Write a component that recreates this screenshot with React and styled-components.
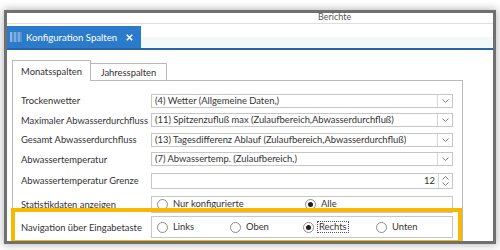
import React from 'react';
import styled, { createGlobalStyle } from 'styled-components';

const FONT = `Lato, "Open Sans", sans-serif`;

const Global = createGlobalStyle`
  html, body { margin: 0; padding: 0; background: #fff; }
  body { font-family: ${FONT}; width: 500px; height: 250px; overflow: hidden; padding-top: 10px; }
  * { box-sizing: border-box; }
`;

const Window = styled.div`
  margin-left: 4px;
  width: 492px;
  height: 234px;
  border: 3px solid #707070;
  background: #fff;
  box-shadow: 0 0 8px 1px rgba(0, 0, 0, 0.28);
  overflow: hidden;
  display: flex;
  flex-direction: column;
`;

const TopStrip = styled.div`
  flex: none;
  height: 11px;
  border-bottom: 1px solid #dedede;
  padding-left: 311px;
  font-size: 9px;
  line-height: 7px;
  color: #555;
`;

const DocBar = styled.div`
  flex: none;
  height: 26px;
  padding-top: 2px;
  border-bottom: 2px solid #2767a6;
  background: linear-gradient(to bottom, #fff 0, #fff 13px, #f3f8fb 13px);
  display: flex;
`;

const DocTab = styled.div`
  width: 134px;
  height: 22px;
  background: #2b7bca;
  display: flex;
  align-items: center;
  padding: 0 8px 0 3px;
  color: #fff;
  font-size: 9.6px;
`;

const DocTitle = styled.span`
  margin-left: 4px;
`;

const CloseBtn = styled.span`
  margin-left: auto;
  display: flex;
`;

const Content = styled.div`
  flex: 1;
  padding: 10px 0 0 5px;
  display: flex;
  flex-direction: column;
`;

const TabStrip = styled.div`
  display: flex;
  align-items: flex-end;
  height: 20px;
`;

const Tab = styled.div`
  position: relative;
  z-index: 1;
  width: ${(p) => (p.$active ? 79 : 76)}px;
  height: ${(p) => (p.$active ? 21 : 17)}px;
  margin-bottom: ${(p) => (p.$active ? -1 : 0)}px;
  border: 1px solid #b9b9b9;
  border-bottom: none;
  border-left: ${(p) => (p.$active ? '1px solid #b9b9b9' : 'none')};
  background: #fff;
  display: flex;
  align-items: center;
  justify-content: center;
  padding-top: ${(p) => (p.$active ? 0 : 1)}px;
  font-size: 9.4px;
  color: #333;
`;

const Panel = styled.div`
  width: 451px;
  flex: 1;
  border: 1px solid #b9b9b9;
  border-bottom: none;
  padding-top: 10px;
  display: flex;
  flex-direction: column;
`;

const Row = styled.div`
  position: relative;
  flex: none;
  height: ${(p) => p.$h}px;
  padding: ${(p) => p.$pt || 0}px 9px 0 8px;
  display: flex;
  align-items: center;

  ${(p) =>
    p.$highlight &&
    `
    &::after {
      content: '';
      position: absolute;
      top: -4px;
      bottom: -2px;
      left: -2px;
      right: 0;
      border: 4px solid #f7b900;
      pointer-events: none;
    }
  `}
`;

const Label = styled.div`
  width: 130px;
  flex: none;
  font-size: 9.4px;
  color: #333;
  white-space: nowrap;
`;

const Dropdown = styled.div`
  width: 302px;
  height: 14px;
  border: 1px solid #c6c6c6;
  display: flex;
  background: #fff;
`;

const DropText = styled.div`
  flex: 1;
  padding-left: 3px;
  font-size: 9.4px;
  line-height: 12px;
  color: #333;
  white-space: nowrap;
  overflow: hidden;
`;

const DropBtn = styled.div`
  width: 15px;
  flex: none;
  border-left: 1px solid #d6d6d6;
  display: flex;
  align-items: center;
  justify-content: center;
`;

const Spinner = styled.div`
  width: 302px;
  height: 16px;
  border: 1px solid #c6c6c6;
  display: flex;
`;

const SpinValue = styled.div`
  flex: 1;
  text-align: right;
  padding-right: 3px;
  font-size: 9.4px;
  line-height: 14px;
  color: #333;
`;

const SpinBtn = styled.div`
  width: 14px;
  flex: none;
  border-left: 1px solid #d6d6d6;
  display: flex;
  flex-direction: column;
  align-items: center;
  justify-content: center;
  gap: 2px;
`;

const RadioGroup = styled.div`
  width: 302px;
  height: ${(p) => p.$h}px;
  border: 1px solid #c6c6c6;
  padding-left: 5px;
  display: grid;
  grid-template-columns: repeat(${(p) => p.$cols}, ${(p) => p.$colW}px);
  align-items: center;
`;

const RadioItem = styled.div`
  display: flex;
  align-items: center;
  gap: 3px;
  font-size: 9.4px;
  color: #333;
  white-space: nowrap;
`;

const Circle = styled.span`
  width: 11px;
  height: 11px;
  flex: none;
  border-radius: 50%;
  border: 1px solid #8c8c8c;
  background: #fff;
  display: flex;
  align-items: center;
  justify-content: center;

  &::after {
    content: '';
    width: 5px;
    height: 5px;
    border-radius: 50%;
    background: ${(p) => (p.$checked ? '#1f1f1f' : 'transparent')};
  }
`;

const RadioText = styled.span`
  border: 1px dotted ${(p) => (p.$focus ? '#555' : 'transparent')};
  padding: 0 1px;
  line-height: 10px;
`;

const Grip = () => (
  <svg width="12" height="10" viewBox="0 0 12 10">
    <rect x="0" y="0" width="12" height="10" fill="#4f90d2" />
    <rect x="0" y="0" width="2" height="10" fill="#8db6e3" />
    <rect x="4" y="0" width="2" height="10" fill="#7fabdc" />
    <rect x="8" y="0" width="2" height="10" fill="#7fabdc" />
  </svg>
);

const XIcon = () => (
  <svg width="7" height="7" viewBox="0 0 7 7">
    <path d="M0.8 0.8 L6.2 6.2 M6.2 0.8 L0.8 6.2" stroke="#fff" strokeWidth="1.6" />
  </svg>
);

const Chevron = ({ up }) => (
  <svg width="7" height="4" viewBox="0 0 7 4">
    <path
      d={up ? 'M0.5 3.5 L3.5 0.5 L6.5 3.5' : 'M0.5 0.5 L3.5 3.5 L6.5 0.5'}
      fill="none"
      stroke="#7a7a7a"
      strokeWidth="1"
    />
  </svg>
);

const dropdowns = [
  ['Trockenwetter', '(4) Wetter (Allgemeine Daten,)', 19],
  ['Maximaler Abwasserdurchfluss', '(11) Spitzenzufluß max (Zulaufbereich,Abwasserdurchfluß)', 20],
  ['Gesamt Abwasserdurchfluss', '(13) Tagesdifferenz Ablauf (Zulaufbereich,Abwasserdurchfluß)', 19],
  ['Abwassertemperatur', '(7) Abwassertemp. (Zulaufbereich,)', 20],
];

const Radio = ({ label, checked, focus }) => (
  <RadioItem>
    <Circle $checked={checked} />
    <RadioText $focus={focus}>{label}</RadioText>
  </RadioItem>
);

export default function App() {
  return (
    <>
      <Global />
      <Window>
        <TopStrip>Berichte</TopStrip>
        <DocBar>
          <DocTab>
            <Grip />
            <DocTitle>Konfiguration Spalten</DocTitle>
            <CloseBtn>
              <XIcon />
            </CloseBtn>
          </DocTab>
        </DocBar>
        <Content>
          <TabStrip>
            <Tab $active>Monatsspalten</Tab>
            <Tab>Jahresspalten</Tab>
          </TabStrip>
          <Panel>
            {dropdowns.map(([label, value, h]) => (
              <Row key={label} $h={h}>
                <Label>{label}</Label>
                <Dropdown>
                  <DropText>{value}</DropText>
                  <DropBtn>
                    <Chevron />
                  </DropBtn>
                </Dropdown>
              </Row>
            ))}
            <Row $h={23}>
              <Label>Abwassertemperatur Grenze</Label>
              <Spinner>
                <SpinValue>12</SpinValue>
                <SpinBtn>
                  <Chevron up />
                  <Chevron />
                </SpinBtn>
              </Spinner>
            </Row>
            <Row $h={20} $pt={4}>
              <Label>Statistikdaten anzeigen</Label>
              <RadioGroup $h={17} $cols={2} $colW={148}>
                <Radio label="Nur konfigurierte" />
                <Radio label="Alle" checked />
              </RadioGroup>
            </Row>
            <Row $h={30} $highlight>
              <Label>Navigation über Eingabetaste</Label>
              <RadioGroup $h={22} $cols={4} $colW={73}>
                <Radio label="Links" />
                <Radio label="Oben" />
                <Radio label="Rechts" checked focus />
                <Radio label="Unten" />
              </RadioGroup>
            </Row>
          </Panel>
        </Content>
      </Window>
    </>
  );
}
